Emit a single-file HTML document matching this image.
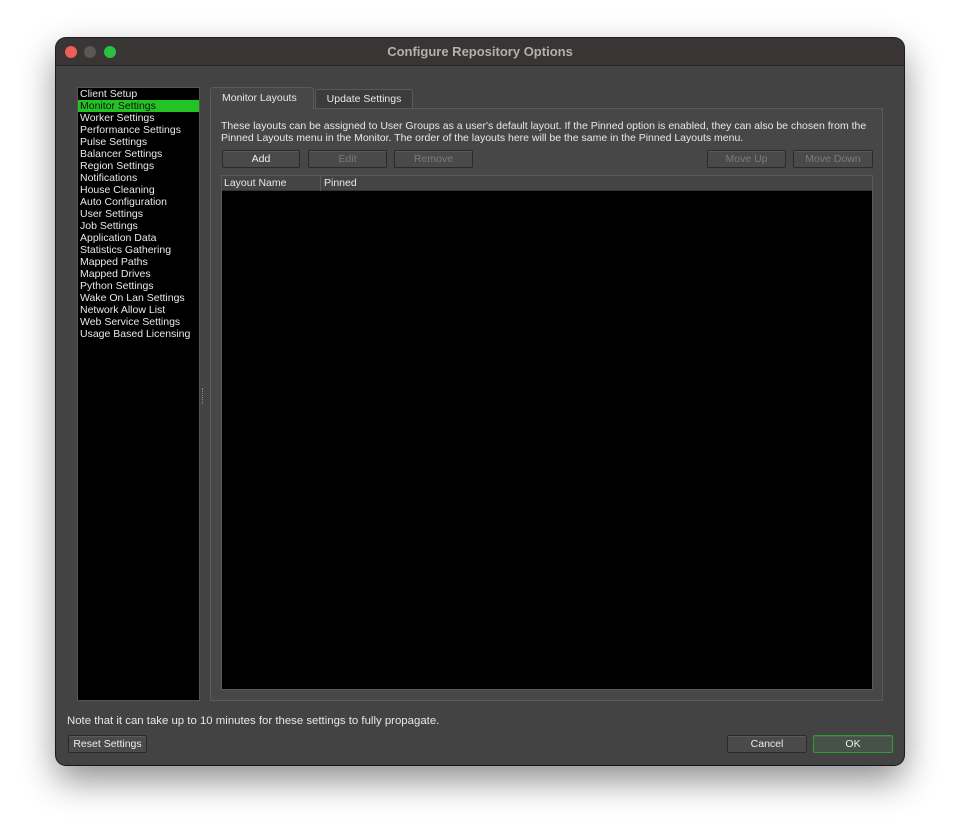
<!DOCTYPE html>
<html><head><style>
*{box-sizing:border-box;margin:0;padding:0}
body{width:960px;height:839px;background:#fff;font-family:"Liberation Sans",sans-serif;font-size:10.5px;color:#e8e8e8;position:relative;overflow:hidden}
.win{position:absolute;left:56px;top:38px;width:848px;height:727px;background:#434343;border-radius:10px;box-shadow:0 15px 35px rgba(0,0,0,.45),0 0 0 1px #222;overflow:hidden}
.title{height:28px;background:#383534;border-bottom:1px solid #222;text-align:center;line-height:28px;font-weight:bold;font-size:13px;color:#b3b0ae}
.dot{position:absolute;top:8px;width:12px;height:12px;border-radius:50%}
.abs{position:absolute}
.list{left:21px;top:49px;width:123px;height:614px;background:#000;border:1px solid #555;padding-top:0}
.list div{height:12px;line-height:12px;padding-left:2px;white-space:nowrap}
.list .sel{background:#22c322;color:#111}
.btn{position:absolute;height:18px;border:1px solid #2a2a2a;border-radius:2px;background:#4a4a4a;text-align:center;line-height:16px;color:#eee;box-shadow:inset 0 1px 0 #5a5a5a}
.dis{color:#7a7a7a}
</style></head><body>
<div class="win">
<div class="title">Configure Repository Options</div>
<div class="dot" style="left:9px;background:#ec5f57"></div>
<div class="dot" style="left:28px;background:#5a5757"></div>
<div class="dot" style="left:48px;background:#29c13f"></div>
<div class="abs list">
<div>Client Setup</div><div class="sel">Monitor Settings</div><div>Worker Settings</div><div>Performance Settings</div><div>Pulse Settings</div><div>Balancer Settings</div><div>Region Settings</div><div>Notifications</div><div>House Cleaning</div><div>Auto Configuration</div><div>User Settings</div><div>Job Settings</div><div>Application Data</div><div>Statistics Gathering</div><div>Mapped Paths</div><div>Mapped Drives</div><div>Python Settings</div><div>Wake On Lan Settings</div><div>Network Allow List</div><div>Web Service Settings</div><div>Usage Based Licensing</div>
</div>
<div class="abs" style="left:146px;top:350px;width:2px;height:16px;border-left:1px dotted #888"></div>
<div class="abs" style="left:154px;top:70px;width:673px;height:593px;border:1px solid #5a5a5a;background:#474747"></div>
<div class="abs" style="left:154px;top:49px;width:104px;height:22px;background:#474747;border:1px solid #5a5a5a;border-bottom:none;border-radius:3px 3px 0 0;line-height:20px;padding-left:11px">Monitor Layouts</div>
<div class="abs" style="left:259px;top:51px;width:98px;height:19px;background:#3c3c3c;border:1px solid #5a5a5a;border-bottom:none;border-radius:3px 3px 0 0;line-height:19px;text-align:center">Update Settings</div>
<div class="abs" style="left:165px;top:82px;width:660px;line-height:12px">These layouts can be assigned to User Groups as a user's default layout. If the Pinned option is enabled, they can also be chosen from the Pinned Layouts menu in the Monitor. The order of the layouts here will be the same in the Pinned Layouts menu.</div>
<div class="btn" style="left:166px;top:112px;width:78px">Add</div>
<div class="btn dis" style="left:252px;top:112px;width:79px">Edit</div>
<div class="btn dis" style="left:338px;top:112px;width:79px">Remove</div>
<div class="btn dis" style="left:651px;top:112px;width:79px">Move Up</div>
<div class="btn dis" style="left:737px;top:112px;width:80px">Move Down</div>
<div class="abs" style="left:165px;top:137px;width:652px;height:515px;background:#000;border:1px solid #5a5a5a">
<div style="height:15px;background:#444;border-bottom:1px solid #333;line-height:15px;position:relative"><span style="position:absolute;left:2px">Layout Name</span><span style="position:absolute;left:98px;top:0;height:15px;border-left:1px solid #5a5a5a;padding-left:3px">Pinned</span></div>
</div>
<div class="abs" style="left:11px;top:677px;font-size:11.4px">Note that it can take up to 10 minutes for these settings to fully propagate.</div>
<div class="btn" style="left:12px;top:697px;width:79px">Reset Settings</div>
<div class="btn" style="left:671px;top:697px;width:80px">Cancel</div>
<div class="btn" style="left:757px;top:697px;width:80px;border-color:#2fa02f;background:#475247">OK</div>
</div>
</body></html>
